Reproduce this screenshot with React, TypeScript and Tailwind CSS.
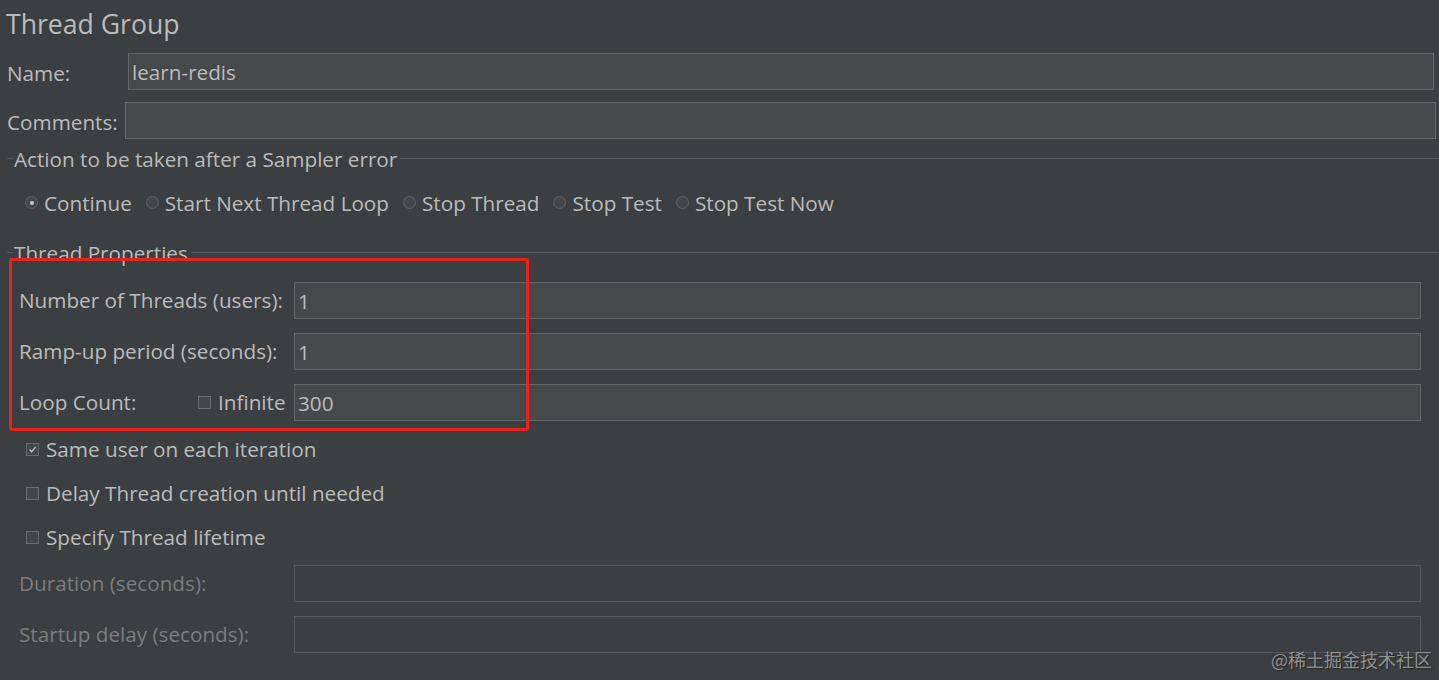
import React from "react";

const font = "font-['Open_Sans','Noto_Sans','Noto_Sans_CJK_SC',sans-serif]";

function Radio({ checked }: { checked?: boolean }) {
  return (
    <span className="w-[13px] h-[13px] rounded-full border border-[#5f6264] bg-[#43474a] flex items-center justify-center shrink-0">
      {checked && <span className="w-[4px] h-[4px] rounded-full bg-[#c8c8c8]" />}
    </span>
  );
}

function Check({ checked }: { checked?: boolean }) {
  return (
    <span className="w-[13px] h-[13px] border border-[#6a6d6f] bg-[#43474a] flex items-center justify-center shrink-0">
      {checked && (
        <svg width="9" height="9" viewBox="0 0 9 9">
          <path d="M1.5 4.5 L3.7 6.8 L7.6 1.8" fill="none" stroke="#c8c8c8" strokeWidth="1.3" />
        </svg>
      )}
    </span>
  );
}

function Field({ value, disabled }: { value?: string; disabled?: boolean }) {
  return (
    <div
      className={
        "flex-1 h-[37px] flex items-center pl-[3px] pt-[2px] border " +
        (disabled ? "border-[#55585a] bg-[#3c3f41]" : "border-[#646667] bg-[#45494a]")
      }
    >
      {value}
    </div>
  );
}

function Legend({ text, top }: { text: string; top: string }) {
  return (
    <div className={"h-[20px] flex items-center " + top}>
      <div className="w-[6px] ml-[7px] h-px bg-[#55585a] mt-[-2px]" />
      <span className="px-[1px]">{text}</span>
      <div className="flex-1 h-px bg-[#55585a] mt-[-2px] ml-[2px]" />
    </div>
  );
}

export default function App() {
  return (
    <div className={"w-[1439px] h-[680px] bg-[#3c3f41] text-[#bbbbbb] text-[20.7px] leading-none relative overflow-hidden " + font}>
      <div className="h-[48px] flex items-center pl-[6px] text-[26.6px] text-[#bbbbbb]">Thread Group</div>

      <div className="mt-[4px] h-[38px] flex items-center pr-[5px]">
        <div className="w-[128px] pl-[7px] shrink-0 pt-[4px]">Name:</div>
        <Field value="learn-redis" />
      </div>

      <div className="mt-[11px] h-[38px] flex items-center pr-[3px]">
        <div className="w-[125px] pl-[7px] shrink-0 pt-[4px]">Comments:</div>
        <Field />
      </div>

      <Legend text="Action to be taken after a Sampler error" top="mt-[10px]" />

      <div className="mt-[22px] h-[24px] flex items-center pl-[25px] gap-[14px]">
        {[
          ["Continue", true],
          ["Start Next Thread Loop", false],
          ["Stop Thread", false],
          ["Stop Test", false],
          ["Stop Test Now", false],
        ].map(([t, c]) => (
          <div key={t as string} className="flex items-center gap-[6px]">
            <Radio checked={c as boolean} />
            <span>{t as string}</span>
          </div>
        ))}
      </div>

      <Legend text="Thread Properties" top="mt-[28px]" />

      <div className="pr-[18px]">
        <div className="mt-[19px] h-[37px] flex items-center">
          <div className="w-[294px] pl-[19px] shrink-0">Number of Threads (users):</div>
          <Field value="1" />
        </div>
        <div className="mt-[14px] h-[37px] flex items-center">
          <div className="w-[294px] pl-[19px] shrink-0">Ramp-up period (seconds):</div>
          <Field value="1" />
        </div>
        <div className="mt-[14px] h-[37px] flex items-center">
          <div className="w-[294px] pl-[19px] shrink-0 flex items-center">
            <span className="w-[179px]">Loop Count:</span>
            <Check />
            <span className="ml-[7px]">Infinite</span>
          </div>
          <Field value="300" />
        </div>

        <div className="mt-[16px] h-[24px] flex items-center pl-[26px] gap-[7px]">
          <Check checked />
          <span>Same user on each iteration</span>
        </div>
        <div className="mt-[20px] h-[24px] flex items-center pl-[26px] gap-[7px]">
          <Check />
          <span>Delay Thread creation until needed</span>
        </div>
        <div className="mt-[20px] h-[24px] flex items-center pl-[26px] gap-[7px]">
          <Check />
          <span>Specify Thread lifetime</span>
        </div>

        <div className="mt-[16px] h-[37px] flex items-center text-[#7a7c7e]">
          <div className="w-[294px] pl-[19px] shrink-0">Duration (seconds):</div>
          <Field disabled />
        </div>
        <div className="mt-[14px] h-[37px] flex items-center text-[#7a7c7e]">
          <div className="w-[294px] pl-[19px] shrink-0">Startup delay (seconds):</div>
          <Field disabled />
        </div>
      </div>

      <div className="absolute left-[9px] top-[258px] w-[520px] h-[173px] border-[3px] border-[#e8231c] rounded-[3px] pointer-events-none" />

      <div className="absolute right-[7px] top-[650px] text-[18px] text-[#8f9193] [text-shadow:1px_1px_1px_#222] font-['Noto_Sans_CJK_SC',sans-serif]">
        @稀土掘金技术社区
      </div>
    </div>
  );
}
